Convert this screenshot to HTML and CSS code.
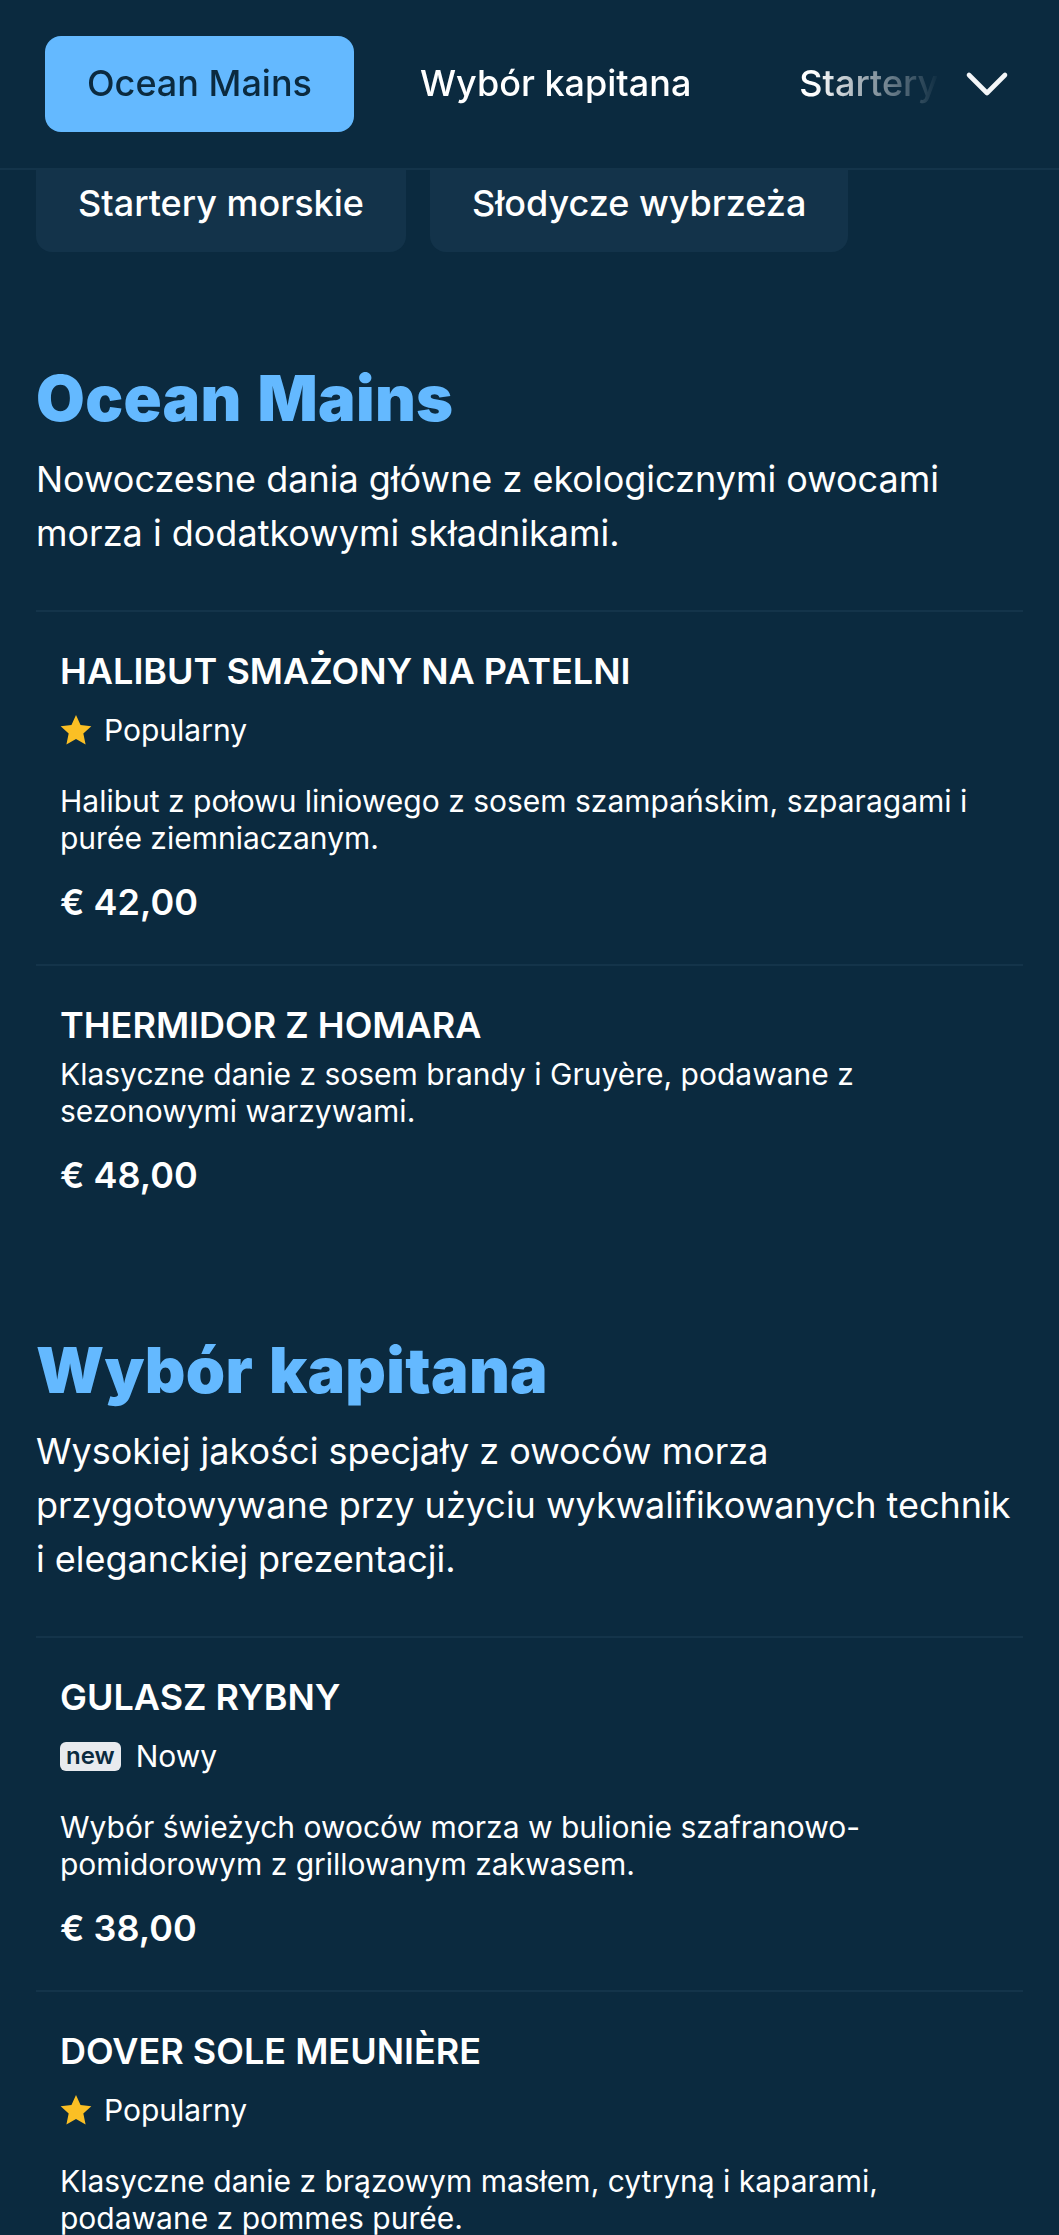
FILE: index.html
```html
<!DOCTYPE html>
<html lang="pl">
<head>
    <meta charset="UTF-8">
    <meta name="viewport" content="width=device-width, initial-scale=1.0">
    <title>Menu</title>
    <link rel="stylesheet" href="styles.css">
</head>
<body>
    <header class="topbar">
        <nav class="tabs">
            <a class="tab tab-active" href="#">Ocean Mains</a>
            <a class="tab" href="#">Wybór kapitana</a>
            <a class="tab" href="#">Startery morskie</a>
        </nav>
        <button class="toggle" aria-label="Rozwiń">
            <svg width="44" height="26" viewBox="0 0 44 26" fill="none">
                <path d="M4 4 L22 22 L40 4" stroke="#f4f6f8" stroke-width="4.6" stroke-linecap="round" stroke-linejoin="round"/>
            </svg>
        </button>
    </header>

    <div class="chips">
        <a class="chip" href="#">Startery morskie</a>
        <a class="chip" href="#">Słodycze wybrzeża</a>
    </div>

    <section class="section">
        <h2>Ocean Mains</h2>
        <p class="lead">Nowoczesne dania główne z ekologicznymi owocami morza i dodatkowymi składnikami.</p>

        <article class="item">
            <h3>HALIBUT SMAŻONY NA PATELNI</h3>
            <div class="tag">
                <svg class="star" width="32" height="32" viewBox="0 0 24 24"><path d="M12 .8l3.4 7.5 8.1.9-6 5.5 1.7 8.1-7.2-4.1-7.2 4.1 1.7-8.1-6-5.5 8.1-.9z" fill="#fbbf24"/></svg>
                <span>Popularny</span>
            </div>
            <p class="desc">Halibut z połowu liniowego z sosem szampańskim, szparagami i purée ziemniaczanym.</p>
            <div class="price">€ 42,00</div>
        </article>

        <article class="item">
            <h3>THERMIDOR Z HOMARA</h3>
            <p class="desc">Klasyczne danie z sosem brandy i Gruyère, podawane z sezonowymi warzywami.</p>
            <div class="price">€ 48,00</div>
        </article>
    </section>

    <section class="section">
        <h2>Wybór kapitana</h2>
        <p class="lead">Wysokiej jakości specjały z owoców morza przygotowywane przy użyciu wykwalifikowanych technik i eleganckiej prezentacji.</p>

        <article class="item">
            <h3>GULASZ RYBNY</h3>
            <div class="tag tag-new">
                <span class="new">new</span>
                <span>Nowy</span>
            </div>
            <p class="desc">Wybór świeżych owoców morza w bulionie szafranowo-pomidorowym z grillowanym zakwasem.</p>
            <div class="price">€ 38,00</div>
        </article>

        <article class="item">
            <h3>DOVER SOLE MEUNIÈRE</h3>
            <div class="tag">
                <svg class="star" width="32" height="32" viewBox="0 0 24 24"><path d="M12 .8l3.4 7.5 8.1.9-6 5.5 1.7 8.1-7.2-4.1-7.2 4.1 1.7-8.1-6-5.5 8.1-.9z" fill="#fbbf24"/></svg>
                <span>Popularny</span>
            </div>
            <p class="desc">Klasyczne danie z brązowym masłem, cytryną i kaparami, podawane z pommes purée.</p>
        </article>
    </section>
</body>
</html>
```

FILE: styles.css
```css
* {
    margin: 0;
    padding: 0;
    box-sizing: border-box;
}

html, body {
    height: 100%;
    overflow: hidden;
}

body {
    background-color: #0b2a3f;
    color: #fff;
    font-family: Inter, "Liberation Sans", sans-serif;
}

a {
    text-decoration: none;
    color: inherit;
}

/* Top bar */
.topbar {
    display: flex;
    align-items: center;
    height: 170px;
    padding: 0 50px 0 45px;
    border-bottom: 2px solid #14344a;
}

.tabs {
    display: flex;
    flex: 1;
    min-width: 0;
    gap: 24px;
    overflow: hidden;
    -webkit-mask-image: linear-gradient(to right, #000 86%, transparent 100%);
    mask-image: linear-gradient(to right, #000 86%, transparent 100%);
}

.tab {
    flex: none;
    height: 96px;
    padding: 0 42px;
    border-radius: 16px;
    font-size: 36px;
    font-weight: 500;
    line-height: 94px;
    white-space: nowrap;
}

.tab-active {
    background-color: #64b9ff;
    color: #0b2a3f;
}

.toggle {
    flex: none;
    display: flex;
    margin-left: 25px;
    background: none;
    border: none;
}

/* Category chips, partly under the bar */
.chips {
    display: flex;
    gap: 24px;
    padding: 0 36px;
}

.chip {
    height: 82px;
    padding: 0 42px 14px;
    border-radius: 0 0 16px 16px;
    background-color: #13334a;
    font-size: 36px;
    font-weight: 500;
    line-height: 66px;
}

/* Menu sections */
.section {
    padding: 0 36px;
    margin-top: 110px;
}

.section + .section {
    margin-top: 97px;
}

h2 {
    color: #64b9ff;
    font-size: 63px;
    font-weight: 900;
    letter-spacing: .3px;
    word-spacing: 3px;
    line-height: 72px;
    margin-bottom: 18px;
}

.lead {
    font-size: 36px;
    line-height: 54px;
    margin-bottom: 50px;
}

.item {
    padding: 36px 24px 39px;
    border-top: 2px solid #14344a;
}

h3 {
    font-size: 36px;
    font-weight: 600;
    line-height: 46px;
    margin-bottom: 8px;
}

.tag {
    display: flex;
    align-items: center;
    gap: 12px;
    height: 40px;
    margin-top: 16px;
    margin-bottom: 33px;
    font-size: 30px;
}

.tag-new {
    gap: 15px;
}

.new {
    height: 29px;
    padding: 0 6px;
    border-radius: 6px;
    background-color: #e8eaee;
    color: #0b2a3f;
    font-size: 24px;
    font-weight: 600;
    line-height: 27px;
}

.desc {
    font-size: 30px;
    line-height: 37px;
}

.price {
    margin-top: 22px;
    font-size: 36px;
    font-weight: 600;
    line-height: 46px;
}
```
